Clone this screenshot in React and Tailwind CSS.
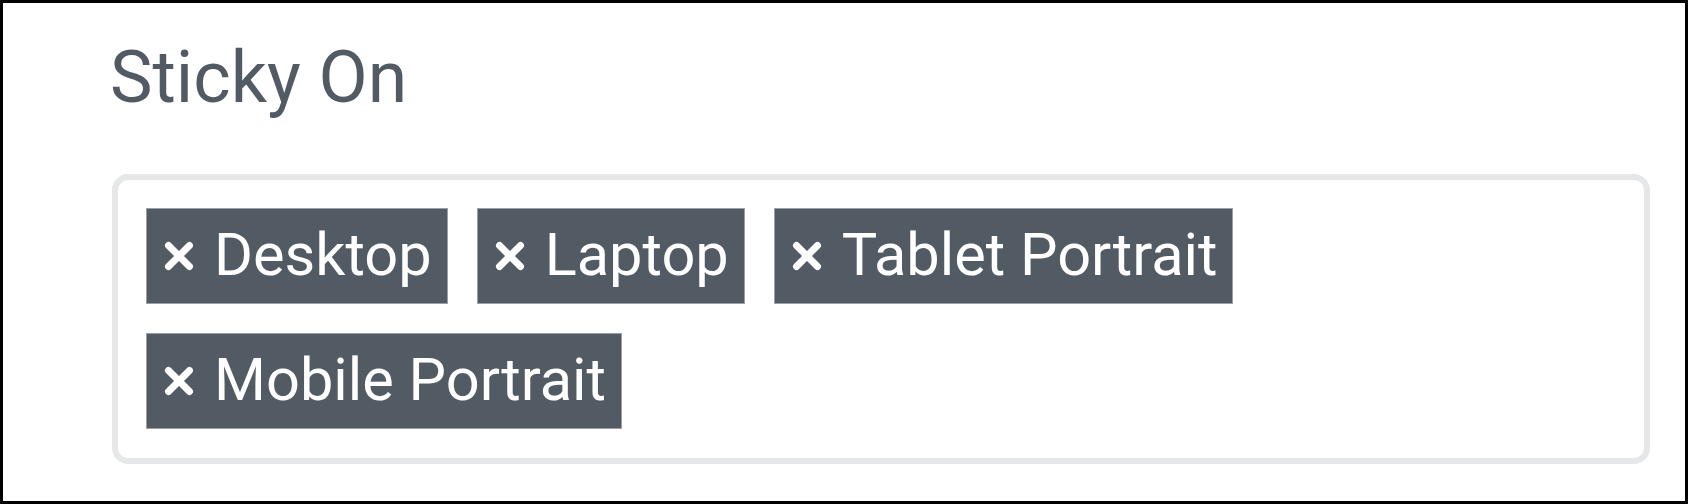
import React from 'react';

const devices = ['Desktop', 'Laptop', 'Tablet Portrait', 'Mobile Portrait'];

function RemoveIcon() {
  return (
    <svg width="30" height="30" viewBox="0 0 30 30" className="shrink-0">
      <path d="M4.5 4.5 L25.5 25.5 M25.5 4.5 L4.5 25.5" stroke="#fff" strokeWidth="7" strokeLinecap="round" fill="none" />
    </svg>
  );
}

function Tag({ label }) {
  return (
    <span className="inline-flex items-center h-[96px] pl-[17px] pr-[15px] gap-[20px] bg-[#525a63] border border-[#9aa0a6] text-white text-[59.5px] leading-none">
      <RemoveIcon />
      <span>{label}</span>
    </span>
  );
}

export default function App() {
  return (
    <div
      className="w-[1688px] h-[504px] border-[3px] border-black bg-white overflow-hidden"
      style={{ fontFamily: 'Roboto, "Noto Sans", sans-serif' }}
    >
      <div className="pl-[109px] pr-[35px] pt-[39px]">
        <h2 className="-ml-[2px] text-[71.5px] leading-none font-normal text-[#525a63]">Sticky On</h2>
        <div className="mt-[60px] h-[290px] border-[6px] border-[#e6e7e8] rounded-[16px] pl-[28px] pr-[28px] pt-[28px]">
          <div className="flex flex-wrap gap-x-[29px] gap-y-[29px]">
            {devices.map(d => (
              <Tag key={d} label={d} />
            ))}
          </div>
        </div>
      </div>
    </div>
  );
}
